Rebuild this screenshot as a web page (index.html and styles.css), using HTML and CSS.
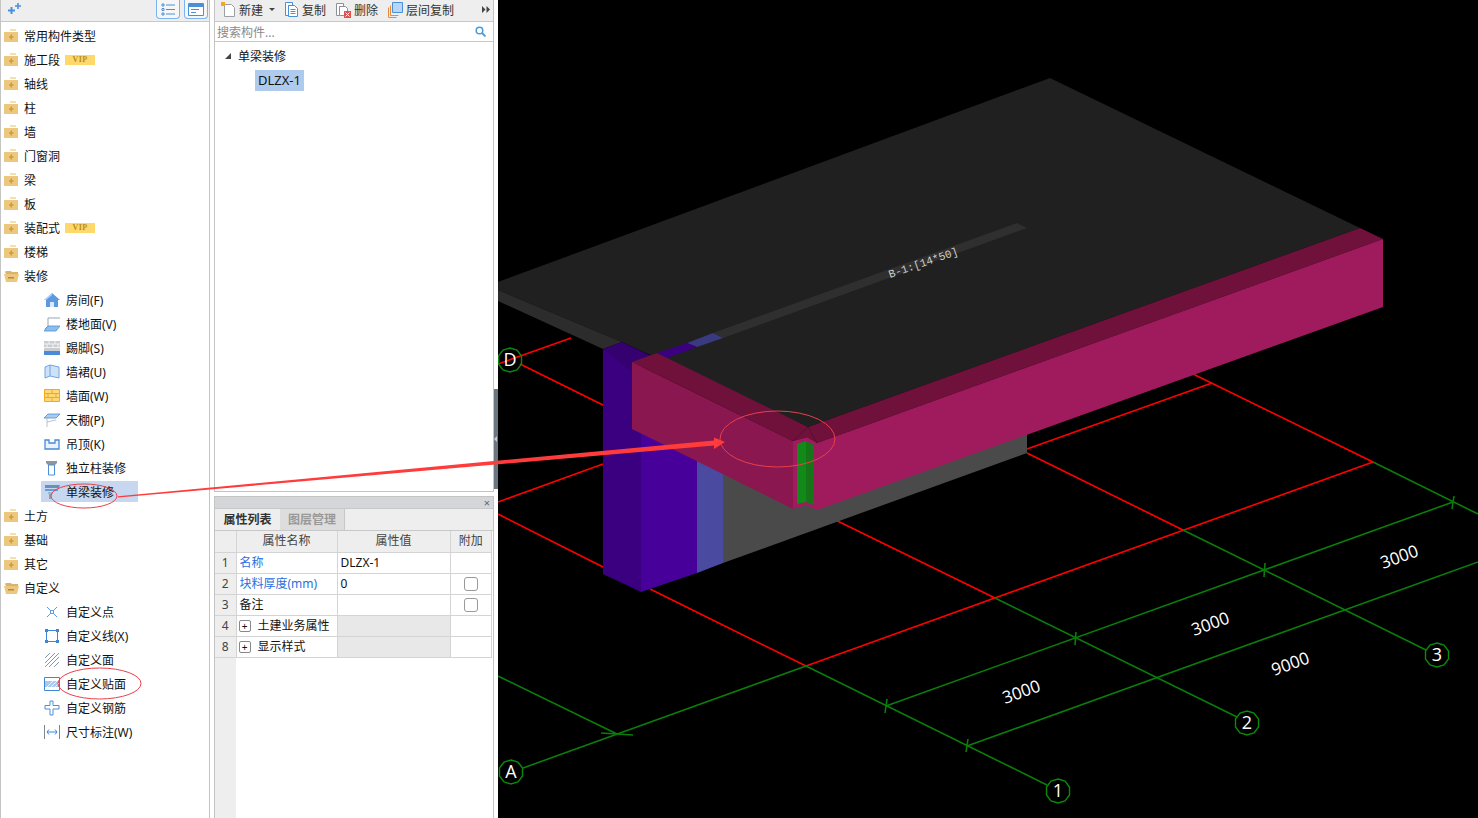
FILE: index.html
```html
<!DOCTYPE html>
<html lang="zh-CN">

<head>
    <meta charset="UTF-8">
    <title>单梁装修</title>
    <link rel="stylesheet" href="styles.css">
</head>

<body>
    <svg class="defs" width="0" height="0">
        <symbol id="fold" viewBox="0 0 16 14">
            <path d="M6 0h6v2H6z" fill="#f3dfb4" />
            <path d="M0 3h14v10H0z" fill="#ecc87e" />
            <path d="M5 7.200h1.500V5.500H8v1.700h1.500v1.500H8v1.700H6.500V8.700H5z" fill="#cf9a3a" />
        </symbol>
        <symbol id="open" viewBox="0 0 16 14">
            <path d="M1 3l1-1h5l1 1h6v2H2z" fill="#d8b470" />
            <path d="M0 5h15l-2 8H2z" fill="#ecc87e" />
            <path d="M4 8h6v1.500H4z" fill="#b98a35" />
        </symbol>
    </svg>

    <div class="app">
        <!-- 左侧构件树 -->
        <aside class="tree">
            <div class="tree-head">
                <svg class="spark" width="14" height="12" viewBox="0 0 14 12">
                    <path d="M0 6.500h2.500V4h2v2.500H7v2H4.500V11h-2V8.500H0zM7 2.200h2.200V0h1.600v2.200H13v1.600h-2.200V6H9.200V3.800H7z" fill="#4a90d9" />
                </svg>
                <span class="head-btn">
                    <svg width="14" height="13" viewBox="0 0 14 13">
                        <path d="M1 1h2v2H1zM1 5.500h2v2H1zM1 10h2v2H1z" fill="none" stroke="#4a90d9" />
                        <path d="M5 2h9M5 6.500h9M5 11h9" stroke="#4a90d9" />
                    </svg>
                </span>
                <span class="head-btn">
                    <svg width="16" height="13" viewBox="0 0 16 13">
                        <path d="M.5.500h15v12H.5z" fill="#fff" stroke="#4a90d9" />
                        <path d="M1 1h14v3H1z" fill="#4a90d9" />
                        <path d="M3 6.500h8M3 9.500h5" stroke="#4a90d9" />
                    </svg>
                </span>
            </div>
            <ul class="tree-list">
                <li class="row"><svg class="folder"><use href="#fold" /></svg>常用构件类型</li>
                <li class="row"><svg class="folder"><use href="#fold" /></svg>施工段<span class="vip">VIP</span></li>
                <li class="row"><svg class="folder"><use href="#fold" /></svg>轴线</li>
                <li class="row"><svg class="folder"><use href="#fold" /></svg>柱</li>
                <li class="row"><svg class="folder"><use href="#fold" /></svg>墙</li>
                <li class="row"><svg class="folder"><use href="#fold" /></svg>门窗洞</li>
                <li class="row"><svg class="folder"><use href="#fold" /></svg>梁</li>
                <li class="row"><svg class="folder"><use href="#fold" /></svg>板</li>
                <li class="row"><svg class="folder"><use href="#fold" /></svg>装配式<span class="vip">VIP</span></li>
                <li class="row"><svg class="folder"><use href="#fold" /></svg>楼梯</li>
                <li class="row"><svg class="folder"><use href="#open" /></svg>装修</li>
                <li class="row child"><svg class="ico" viewBox="0 0 16 16">
                        <path d="M8 1L0 8h2v7h12V8h2z" fill="#5b9ae0" />
                        <path d="M8 1L0 8h2L8 3z" fill="#bcd6f2" />
                        <path d="M6 10h4v5H6z" fill="#dbe9f8" />
                    </svg>房间(F)</li>
                <li class="row child"><svg class="ico" viewBox="0 0 16 16">
                        <path d="M4 10V2h12M4 10L1 13" fill="none" stroke="#9aa5b1" />
                        <path d="M4 10h12l-4 5H0z" fill="#8fbdeb" stroke="#4a90d9" stroke-width=".8" />
                    </svg>楼地面(V)</li>
                <li class="row child"><svg class="ico" viewBox="0 0 16 16">
                        <path d="M0 1h16v10H0z" fill="#c9ccd0" />
                        <path d="M0 4h16M0 7.500h16M5 1v3M11 1v3M3 4v3.500M9 4v3.500M14 4v3.500" stroke="#f2f2f2" />
                        <path d="M0 11h16v4H0z" fill="#4a8ad6" />
                    </svg>踢脚(S)</li>
                <li class="row child"><svg class="ico" viewBox="0 0 16 16">
                        <path d="M1 3l5-2 9 2v11l-9-2-5 2z" fill="#cfe1f6" stroke="#6ea6e4" />
                        <path d="M6 1v11" stroke="#6ea6e4" />
                    </svg>墙裙(U)</li>
                <li class="row child"><svg class="ico" viewBox="0 0 16 14">
                        <path d="M.5.500h15v12H.5z" fill="#ffd978" stroke="#f5a81c" />
                        <path d="M0 4.500h16M0 8.500h16M8 1v3.500M4 4.500v4M12 4.500v4M8 8.500v4" stroke="#f5a81c" />
                    </svg>墙面(W)</li>
                <li class="row child"><svg class="ico" viewBox="0 0 16 16">
                        <path d="M4 2h12l-4 4H0z" fill="#a9ccf0" stroke="#4a90d9" stroke-width=".8" />
                        <path d="M3 6v9M3 10l9-2" fill="none" stroke="#aab4be" stroke-width=".8" />
                    </svg>天棚(P)</li>
                <li class="row child"><svg class="ico" viewBox="0 0 16 14">
                        <path d="M1 3h4v3h6V3h4v9H1z" fill="#eaf2fb" stroke="#4a8ad6" stroke-width="1.300" />
                    </svg>吊顶(K)</li>
                <li class="row child"><svg class="ico" viewBox="0 0 16 16">
                        <path d="M2 1h11v2l-2 2H4L2 3z" fill="#8f959b" />
                        <path d="M4.500 5h6v10h-6z" fill="#fff" stroke="#4a90d9" />
                    </svg>独立柱装修</li>
                <li class="row child is-active"><svg class="ico" viewBox="0 0 16 16">
                        <path d="M1 1h15l-1 3H1z" fill="#6b8fb5" />
                        <path d="M1 5h13v2H1z" fill="#5f9fe0" />
                        <path d="M4 8h5v2H4z" fill="#9eb8d2" />
                        <path d="M6 10v5" stroke="#5a6570" />
                    </svg>单梁装修</li>
                <li class="row"><svg class="folder"><use href="#fold" /></svg>土方</li>
                <li class="row"><svg class="folder"><use href="#fold" /></svg>基础</li>
                <li class="row"><svg class="folder"><use href="#fold" /></svg>其它</li>
                <li class="row"><svg class="folder"><use href="#open" /></svg>自定义</li>
                <li class="row child"><svg class="ico" viewBox="0 0 16 16">
                        <path d="M3 3l10 10M13 3L3 13" stroke="#5b9ae0" />
                        <path d="M6.500 6.500h3v3h-3z" fill="#fff" stroke="#5b9ae0" />
                    </svg>自定义点</li>
                <li class="row child"><svg class="ico" viewBox="0 0 16 16">
                        <path d="M2.500 2.500h11v11h-11z" fill="none" stroke="#3f87d6" />
                        <path d="M1 1h3v3H1zM12 1h3v3h-3zM1 12h3v3H1zM12 12h3v3h-3z" fill="#3f87d6" />
                    </svg>自定义线(X)</li>
                <li class="row child"><svg class="ico" viewBox="0 0 16 16">
                        <path d="M1 6l5-5M1 11L11 1M1 15L15 1M5 15L15 5M10 15l5-5" stroke="#7a97b5" />
                    </svg>自定义面</li>
                <li class="row child"><svg class="ico" viewBox="0 0 16 16">
                        <path d="M.5 1.500h15v13H.5z" fill="#fff" stroke="#3f87d6" />
                        <path d="M1 5h14v6H1z" fill="#a9c8ec" />
                        <path d="M3 11l6-6M7 11l6-6M11 11l4-4" stroke="#eef5fc" />
                    </svg>自定义贴面</li>
                <li class="row child"><svg class="ico" viewBox="0 0 16 16">
                        <path d="M6 1h3v4.500h6V9H9v6H6V9H1V5.500h5z" fill="#fff" stroke="#4a90d9" />
                    </svg>自定义钢筋</li>
                <li class="row child"><svg class="ico" viewBox="0 0 16 16">
                        <path d="M.5 1v14M15.500 1v14" stroke="#7d8893" />
                        <path d="M3 8h10M5 5.500L3 8l2 2.500M11 5.500L13 8l-2 2.500" fill="none" stroke="#3f87d6" />
                    </svg>尺寸标注(W)</li>
            </ul>
        </aside>

        <!-- 中间构件列表和属性 -->
        <section class="mid">
            <div class="mid-top">
                <div class="toolbar">
                    <span class="tool"><svg width="15" height="16" viewBox="0 0 15 16">
                            <path d="M3.500 2.500h7l3 3v9h-10z" fill="#fff" stroke="#9aa0a6" />
                            <path d="M0 0h4v4H0z" fill="#f5a623" />
                        </svg>新建<i class="caret"></i></span>
                    <span class="tool"><svg width="14" height="16" viewBox="0 0 14 16">
                            <path d="M.5.500h7v3h-4v10h-3z" fill="#fff" stroke="#4a90d9" />
                            <path d="M3.500 3.500h6l3 3v8h-9z" fill="#fff" stroke="#4a90d9" />
                            <path d="M5.500 7.500h5M5.500 9.500h5M5.500 11.500h5" stroke="#4a90d9" />
                        </svg>复制</span>
                    <span class="tool"><svg width="15" height="16" viewBox="0 0 15 16">
                            <path d="M.5 1.500h7v3h-4v9h-3z" fill="#fff" stroke="#8c9196" />
                            <path d="M3.500 4.500h6l2 2v7h-8z" fill="#fff" stroke="#8c9196" />
                            <path d="M8 9h7v7H8z" fill="#d9534f" />
                            <path d="M9.500 10.500l4 4M13.500 10.500l-4 4" stroke="#fff" />
                        </svg>删除</span>
                    <span class="tool"><svg width="15" height="16" viewBox="0 0 15 16">
                            <path d="M.5 5.500v10h8" fill="none" stroke="#e88a3c" />
                            <path d="M2.500 3.500v10h8" fill="none" stroke="#e88a3c" />
                            <path d="M4.500.500h10v10h-10z" fill="#b8d6f6" stroke="#4a90d9" />
                        </svg>层间复制</span>
                    <svg class="more" width="8" height="7" viewBox="0 0 8 7">
                        <path d="M0 0l3.500 3.500L0 7zM4.500 0L8 3.500 4.500 7z" fill="#444" />
                    </svg>
                </div>
                <div class="search">
                    <span>搜索构件...</span>
                    <svg width="11" height="11" viewBox="0 0 11 11">
                        <circle cx="4.500" cy="4.500" r="3.300" fill="none" stroke="#4a9ad9" stroke-width="1.500" />
                        <path d="M7 7l3.500 3.500" stroke="#4a9ad9" stroke-width="1.800" />
                    </svg>
                </div>
                <div class="comp-tree">
                    <div class="comp-root"><i class="tri"></i>单梁装修</div>
                    <div class="comp-item">DLZX-1</div>
                </div>
            </div>

            <div class="mid-bottom">
                <div class="title-bar"><span>×</span></div>
                <div class="tabs">
                    <span class="tab on">属性列表</span>
                    <span class="tab">图层管理</span>
                </div>
                <div class="prop-wrap">
                    <table class="props">
                        <thead>
                            <tr>
                                <th class="c-no"></th>
                                <th class="c-name">属性名称</th>
                                <th class="c-val">属性值</th>
                                <th class="c-add">附加</th>
                            </tr>
                        </thead>
                        <tbody>
                            <tr>
                                <td class="no">1</td>
                                <td class="blue">名称</td>
                                <td>DLZX-1</td>
                                <td></td>
                            </tr>
                            <tr>
                                <td class="no">2</td>
                                <td class="blue">块料厚度(mm)</td>
                                <td>0</td>
                                <td><i class="check"></i></td>
                            </tr>
                            <tr>
                                <td class="no">3</td>
                                <td>备注</td>
                                <td></td>
                                <td><i class="check"></i></td>
                            </tr>
                            <tr>
                                <td class="no">4</td>
                                <td><i class="plus">+</i>土建业务属性</td>
                                <td class="grey"></td>
                                <td></td>
                            </tr>
                            <tr>
                                <td class="no">8</td>
                                <td><i class="plus">+</i>显示样式</td>
                                <td class="grey"></td>
                                <td></td>
                            </tr>
                        </tbody>
                    </table>
                </div>
            </div>
        </section>

        <div class="split"><span class="split-bar"><i class="split-tri"></i></span></div>

        <!-- 三维视图 -->
        <main class="view">
            <svg class="scene" width="980" height="818" viewBox="498 0 980 818">
                <g class="ln-red">
                    <path d="M498 364L571 338" />
                    <path d="M520 364L603 405" />
                    <path d="M498 502L603 464" />
                    <path d="M498 514L603 567" />
                    <path d="M650 589L806 666" />
                    <path d="M806 666L1373 462" />
                    <path d="M815 510L995 598" />
                    <path d="M1027 453L1183 530" />
                    <path d="M1027 449L1212 383" />
                    <path d="M1193 374L1373 462" />
                </g>
                <g class="ln-green">
                    <path d="M498 676L617 734" />
                    <path d="M601 733L633 735" />
                    <path d="M523 768L806 666" />
                    <path d="M806 666L1047 785" />
                    <path d="M995 598L1237 717" />
                    <path d="M1183 530L1426 650" />
                    <path d="M1373 462L1478 514" />
                    <path d="M886 706L1453 502" />
                    <path d="M967 746L1478 562" />
                    <path d="M887 699L885 713M968 739L966 752M1076 632L1075 645M1265 563L1264 577M1454 496L1452 509" />
                </g>

                <!-- 板 -->
                <polygon points="498,282 1050,78 1360,228 808,427 622,342 498,290" fill="#202020" />
                <polygon points="498,290 622,342 603,349 498,301" fill="#2c2c2c" />
                <polygon points="1017,223 1027,228 723,338 713,333" fill="#2f2f2f" />
                <polygon points="687,343 713,333 723,338 697,347" fill="#3a3a80" />
                <polygon points="657,353 687,343 697,347 667,358" fill="#3a0080" />
                <text class="beam-tag" transform="translate(890 278) rotate(-19)">B-1:[14*50]</text>

                <!-- 墙 -->
                <polygon points="723,460 1027,425 1027,453 723,563" fill="#4a4a4a" />
                <polygon points="697,450 723,460 723,563 697,573" fill="#4a4aa0" />
                <polygon points="603,349 641,368 641,592 603,574" fill="#3a0080" />
                <polygon points="641,368 697,395 697,573 641,592" fill="#470099" />
                <polygon points="603,349 622,342 660,360 632,372" fill="#35006f" />

                <!-- 梁 -->
                <polygon points="632,362 657,353 808,427 793,441" fill="#70113c" />
                <polygon points="808,427 1360,228 1383,239 817,443" fill="#70113c" />
                <polygon points="793,441 808,427 817,443 807,437" fill="#70113c" />
                <polygon points="632,362 793,441 793,509 632,429" fill="#8a174f" />
                <polygon points="817,443 1383,239 1383,307 817,510" fill="#a01b5e" />
                <polygon points="793,441 807,437 817,443 817,510 806,505 793,509" fill="#a01b5e" />
                <polygon points="797,444 806,441 806,502 797,504" fill="#128a1a" />
                <polygon points="806,441 814,445 814,505 806,502" fill="#167518" />

                <g class="dim">
                    <text transform="translate(1005 704) rotate(-20)">3000</text>
                    <text transform="translate(1194 636) rotate(-20)">3000</text>
                    <text transform="translate(1383 569) rotate(-20)">3000</text>
                    <text transform="translate(1274 676) rotate(-20)">9000</text>
                </g>
                <g class="bubble" transform="translate(510 360)">
                    <polygon points="0,-12 7,-10 11.500,-4 11.500,4 7,10 0,12 -7,10 -11.500,4 -11.500,-4 -7,-10" />
                    <text y="6">D</text>
                </g>
                <g class="bubble" transform="translate(511 772)">
                    <polygon points="0,-12 7,-10 11.500,-4 11.500,4 7,10 0,12 -7,10 -11.500,4 -11.500,-4 -7,-10" />
                    <text y="6">A</text>
                </g>
                <g class="bubble" transform="translate(1058 791)">
                    <polygon points="0,-12 7,-10 11.500,-4 11.500,4 7,10 0,12 -7,10 -11.500,4 -11.500,-4 -7,-10" />
                    <text y="6">1</text>
                </g>
                <g class="bubble" transform="translate(1247 723)">
                    <polygon points="0,-12 7,-10 11.500,-4 11.500,4 7,10 0,12 -7,10 -11.500,4 -11.500,-4 -7,-10" />
                    <text y="6">2</text>
                </g>
                <g class="bubble" transform="translate(1437 655)">
                    <polygon points="0,-12 7,-10 11.500,-4 11.500,4 7,10 0,12 -7,10 -11.500,4 -11.500,-4 -7,-10" />
                    <text y="6">3</text>
                </g>
            </svg>
        </main>

        <!-- 标注：红圈和箭头压在整个窗口上 -->
        <svg class="marks" width="1478" height="818" viewBox="0 0 1478 818">
            <ellipse cx="84" cy="496" rx="33" ry="12" />
            <ellipse cx="99.500" cy="683.500" rx="41.500" ry="15.500" />
            <ellipse cx="777.500" cy="439" rx="57.500" ry="28" />
            <polygon class="arrow" points="118,496.200 714,440.500 714,437.500 725,442 714,449 714,445.500 118,497.400" />
        </svg>
    </div>
</body>

</html>
```

FILE: styles.css
```css
* {
    box-sizing: border-box;
}

body {
    margin: 0;
    background: #fff;
    color: #111;
    font: 12px "Noto Sans", "Noto Sans CJK SC", sans-serif;
}

ul {
    list-style: none;
    margin: 0;
    padding: 0;
}

i {
    font-style: normal;
}

.defs {
    position: absolute;
}

.app {
    position: relative;
    display: flex;
    height: 818px;
    overflow: hidden;
}

/* 左侧树 */
.tree {
    width: 210px;
    flex: none;
    margin-right: 4px;
    border-left: 1px solid #c4c4c4;
    border-right: 1px solid #c4c4c4;
}

.tree-head {
    display: flex;
    align-items: flex-start;
    gap: 4px;
    height: 22px;
    padding-right: 1px;
    background: #eee;
    border-bottom: 1px solid #c8c8c8;
}

.spark {
    margin: 3px auto 0 7px;
}

.head-btn {
    display: flex;
    align-items: center;
    justify-content: center;
    width: 24px;
    height: 19px;
    border: 1px solid #7ab4f0;
    border-top: 0;
    border-radius: 0 0 4px 4px;
    background: #f6f6f6;
}

.tree-list {
    padding-top: 2px;
}

.row {
    display: flex;
    align-items: center;
    height: 24px;
    padding-left: 3px;
    white-space: nowrap;
}

.folder {
    width: 16px;
    height: 14px;
    margin-right: 4px;
}

.vip {
    width: 30px;
    height: 10px;
    margin-left: 5px;
    background: #ffd86b;
    color: #b98d1e;
    font: bold 8px/10px "Liberation Serif", serif;
    letter-spacing: .5px;
    text-align: center;
}

.child {
    position: relative;
    padding-left: 43px;
}

.ico {
    width: 16px;
    height: 16px;
    margin-right: 6px;
    flex: none;
}

.is-active {
    width: 97px;
    height: 21px;
    margin: 1px 0 2px 40px;
    padding-left: 3px;
    background: #c7d7ef;
}

/* 中间 */
.mid {
    display: flex;
    flex-direction: column;
    width: 280px;
    flex: none;
}

.mid-top {
    height: 492px;
    border: 1px solid #c4c4c4;
    border-top: 0;
}

.toolbar {
    display: flex;
    align-items: center;
    height: 22px;
    padding: 0 3px 2px 6px;
    background: #eee;
    color: #333;
    border-bottom: 1px solid #c8c8c8;
}

.tool {
    display: flex;
    align-items: center;
    gap: 3px;
    margin-right: 10px;
}

.caret {
    width: 0;
    height: 0;
    margin-left: 3px;
    border: 3px solid transparent;
    border-top: 3px solid #444;
    border-bottom: 0;
}

.more {
    margin-left: auto;
}

.search {
    display: flex;
    align-items: center;
    justify-content: space-between;
    height: 20px;
    padding: 0 7px 0 2px;
    color: #8a8a8a;
    border-bottom: 1px solid #c8c8c8;
}

.comp-tree {
    padding-top: 2px;
}

.comp-root {
    display: flex;
    align-items: center;
    height: 24px;
    margin-bottom: 2px;
    padding-left: 10px;
}

.tri {
    width: 0;
    height: 0;
    margin-right: 7px;
    border-left: 6px solid transparent;
    border-bottom: 6px solid #444;
}

.comp-item {
    width: 49px;
    height: 21px;
    margin-left: 40px;
    background: #aecbee;
    font-size: 13px;
    line-height: 21px;
    text-align: center;
}

.mid-bottom {
    display: flex;
    flex-direction: column;
    flex: 1;
    margin-top: 4px;
    border: 1px solid #c4c4c4;
    border-bottom: 0;
}

.title-bar {
    height: 11px;
    padding-right: 3px;
    background: #d4d6da;
    color: #666;
    font-size: 11px;
    line-height: 11px;
    text-align: right;
}

.tabs {
    display: flex;
    height: 22px;
    background: #eee;
    border-top: 1px solid #c8c8c8;
}

.tab {
    width: 65px;
    background: #ddd;
    color: #999;
    font-weight: 700;
    line-height: 21px;
    text-align: center;
    border-right: 1px solid #c8c8c8;
}

.tab.on {
    background: #eee;
    color: #333;
    border-right: 0;
}

.prop-wrap {
    flex: 1;
    background: linear-gradient(to right, #eee 21px, #fff 21px);
    border-top: 1px solid #c8c8c8;
}

.props {
    width: 277px;
    table-layout: fixed;
    border-collapse: collapse;
    line-height: 16px;
}

.props th,
.props td {
    height: 21px;
    padding: 0 3px;
    border: 1px solid #d4d4d4;
    border-top: 0;
    border-left: 0;
    white-space: nowrap;
    overflow: hidden;
}

.props th {
    background: #eee;
    color: #444;
    font-weight: 400;
    text-align: center;
}

.props td {
    background: #fff;
}

.c-no {
    width: 21px;
}

.c-name {
    width: 101px;
}

.c-val {
    width: 113px;
}

.props .no {
    background: #eee;
    color: #444;
    text-align: center;
}

.props .blue {
    color: #2a6fe0;
}

.props .grey {
    background: #e8e8e8;
}

.check {
    display: block;
    width: 14px;
    height: 14px;
    margin: 0 auto;
    border: 1px solid #999;
    border-radius: 3px;
}

.plus {
    display: inline-block;
    width: 12px;
    height: 12px;
    margin: 0 7px 0 -1px;
    border: 1px solid #888;
    border-radius: 2px;
    font-size: 10px;
    line-height: 10px;
    text-align: center;
    vertical-align: 0;
}

/* 分隔条 */
.split {
    display: flex;
    flex-direction: column;
    justify-content: flex-end;
    width: 4px;
    flex: none;
    padding-bottom: 329px;
}

.split-bar {
    display: flex;
    align-items: center;
    height: 100px;
    background: #6b7680;
}

.split-tri {
    width: 0;
    height: 0;
    border: 3px solid transparent;
    border-left: 0;
    border-right: 3px solid #c8ccd0;
}

/* 三维视图 */
.view {
    flex: 1;
    background: #000;
}

.scene {
    display: block;
}

.ln-red path,
.ln-green path {
    fill: none;
    stroke-width: 1.600;
}

.ln-red path {
    stroke: #ff0000;
}

.ln-green path {
    stroke: #0a7d0a;
}

.beam-tag {
    fill: #cfcfcf;
    font: 11px "Liberation Mono", monospace;
}

.dim text {
    fill: #fff;
    font: 17px "Open Sans", sans-serif;
}

.bubble polygon {
    fill: none;
    stroke: #0a8a0a;
    stroke-width: 1.400;
}

.bubble text {
    fill: #fff;
    font: 18px "Open Sans", sans-serif;
    text-anchor: middle;
}

.marks {
    position: absolute;
    top: 0;
    left: 0;
    pointer-events: none;
}

.marks ellipse {
    fill: none;
    stroke: #e8404a;
}

.marks .arrow {
    fill: #ff3b3b;
}
```
